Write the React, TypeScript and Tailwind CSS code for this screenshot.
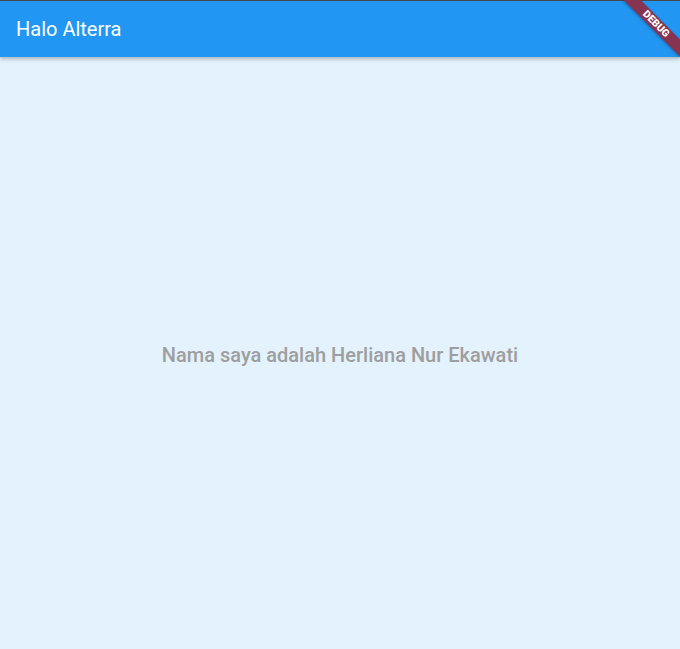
export default function App() {
  return (
    <div className="relative flex h-[649px] w-[680px] flex-col overflow-hidden bg-[#e3f2fd]" style={{ fontFamily: "Roboto, sans-serif" }}>
      <div className="h-px w-full bg-[#4b4b4b]" />
      {/* App bar */}
      <header className="z-10 flex h-14 items-center bg-[#2196f3] px-4 shadow-[0_2px_4px_rgba(0,0,0,0.25)]">
        <h1 className="text-[20px] font-normal text-white">Halo Alterra</h1>
      </header>

      <main className="flex flex-1 items-center justify-center pt-[3px]">
        <p className="text-[20px] font-medium text-[#9e9e9e]">Nama saya adalah Herliana Nur Ekawati</p>
      </main>

      {/* Debug banner */}
      <div className="pointer-events-none absolute left-[616px] top-[18px] z-20 flex h-[12px] w-[80px] rotate-45 items-center justify-center bg-[#873452] shadow-[0_1px_3px_rgba(0,0,0,0.3)]">
        <span className="text-[10.2px] font-black leading-none text-white">DEBUG</span>
      </div>
    </div>
  );
}
